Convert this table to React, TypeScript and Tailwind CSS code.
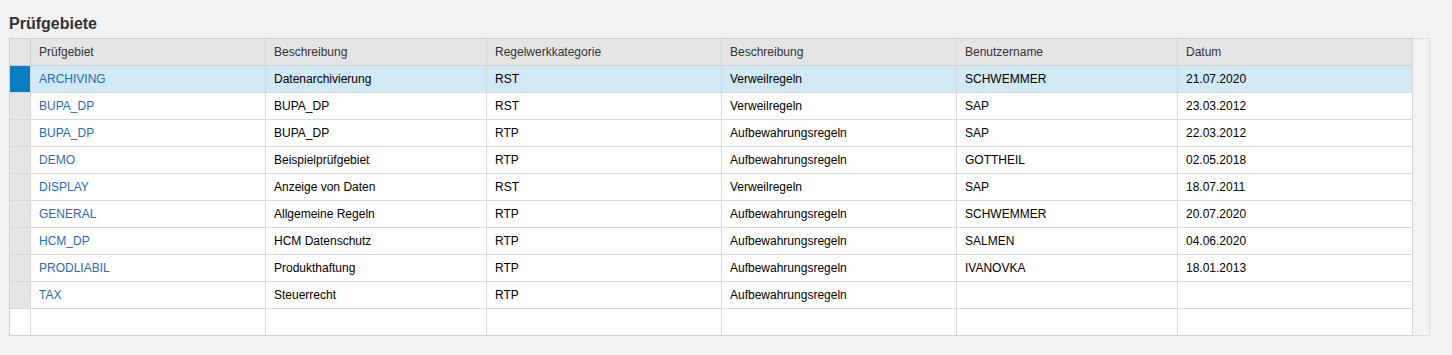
import React from "react";

type Row = {
  gebiet: string;
  beschreibung: string;
  kategorie: string;
  katBeschreibung: string;
  benutzer: string;
  datum: string;
};

const rows: Row[] = [
  { gebiet: "ARCHIVING", beschreibung: "Datenarchivierung", kategorie: "RST", katBeschreibung: "Verweilregeln", benutzer: "SCHWEMMER", datum: "21.07.2020" },
  { gebiet: "BUPA_DP", beschreibung: "BUPA_DP", kategorie: "RST", katBeschreibung: "Verweilregeln", benutzer: "SAP", datum: "23.03.2012" },
  { gebiet: "BUPA_DP", beschreibung: "BUPA_DP", kategorie: "RTP", katBeschreibung: "Aufbewahrungsregeln", benutzer: "SAP", datum: "22.03.2012" },
  { gebiet: "DEMO", beschreibung: "Beispielprüfgebiet", kategorie: "RTP", katBeschreibung: "Aufbewahrungsregeln", benutzer: "GOTTHEIL", datum: "02.05.2018" },
  { gebiet: "DISPLAY", beschreibung: "Anzeige von Daten", kategorie: "RST", katBeschreibung: "Verweilregeln", benutzer: "SAP", datum: "18.07.2011" },
  { gebiet: "GENERAL", beschreibung: "Allgemeine Regeln", kategorie: "RTP", katBeschreibung: "Aufbewahrungsregeln", benutzer: "SCHWEMMER", datum: "20.07.2020" },
  { gebiet: "HCM_DP", beschreibung: "HCM Datenschutz", kategorie: "RTP", katBeschreibung: "Aufbewahrungsregeln", benutzer: "SALMEN", datum: "04.06.2020" },
  { gebiet: "PRODLIABIL", beschreibung: "Produkthaftung", kategorie: "RTP", katBeschreibung: "Aufbewahrungsregeln", benutzer: "IVANOVKA", datum: "18.01.2013" },
  { gebiet: "TAX", beschreibung: "Steuerrecht", kategorie: "RTP", katBeschreibung: "Aufbewahrungsregeln", benutzer: "", datum: "" },
];

const headers = ["Prüfgebiet", "Beschreibung", "Regelwerkkategorie", "Beschreibung", "Benutzername", "Datum"];
const widths = ["w-[235px]", "w-[221px]", "w-[235px]", "w-[235px]", "w-[221px]", "w-[235px]"];

const cell = "flex h-full shrink-0 items-center border-r border-[#d9d9d9] pl-2 truncate";

export default function App() {
  return (
    <div className="min-h-[355px] bg-[#f2f2f2] pt-[15px] pl-[9px] font-['Liberation_Sans',Arial,sans-serif]">
      <h1 className="mb-[5px] h-[18px] text-[16px] font-bold leading-[18px] text-[#333]">
        Prüfgebiete
      </h1>

      <div className="flex items-stretch">
        <div className="border-l border-t border-[#d0d0d0] text-[12px]">
          {/* Kopfzeile */}
          <div className="flex h-[27px] border-b border-[#d0d0d0] bg-[#e5e5e5] text-[#333]">
            <div className="h-full w-[21px] shrink-0 border-r border-[#d0d0d0]" />
            {headers.map((h, i) => (
              <div key={i} className={`${cell} ${widths[i]} border-[#d0d0d0]`}>
                {h}
              </div>
            ))}
          </div>

          {rows.map((r, idx) => {
            const selected = idx === 0;
            return (
              <div
                key={idx}
                className={`flex h-[27px] border-b border-[#d9d9d9] text-black ${
                  selected ? "bg-[#d1e8f5]" : "bg-white"
                }`}
              >
                <div
                  className={`h-full w-[21px] shrink-0 border-r border-[#d9d9d9] ${
                    selected ? "bg-[#0a7ec4]" : "bg-[#e5e5e5]"
                  }`}
                />
                <div className={`${cell} ${widths[0]} text-[#2a6ab5]`}>{r.gebiet}</div>
                <div className={`${cell} ${widths[1]}`}>{r.beschreibung}</div>
                <div className={`${cell} ${widths[2]}`}>{r.kategorie}</div>
                <div className={`${cell} ${widths[3]}`}>{r.katBeschreibung}</div>
                <div className={`${cell} ${widths[4]}`}>{r.benutzer}</div>
                <div className={`${cell} ${widths[5]}`}>{r.datum}</div>
              </div>
            );
          })}

          {/* Leerzeile */}
          <div className="flex h-[27px] border-b border-[#d0d0d0] bg-white">
            <div className="h-full w-[21px] shrink-0 border-r border-[#d9d9d9]" />
            {widths.map((w, i) => (
              <div key={i} className={`${cell} ${w}`} />
            ))}
          </div>
        </div>

        {/* Scrollleiste */}
        <div className="w-[17px] border-y border-r border-[#dcdcdc] bg-[#f3f3f3]" />
      </div>
    </div>
  );
}
